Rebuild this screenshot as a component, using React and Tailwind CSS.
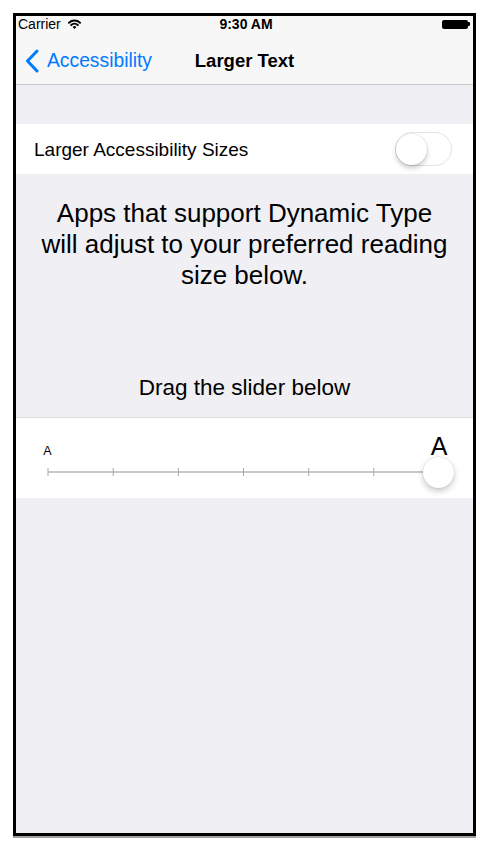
import React from "react";

function Wifi() {
  return (
    <svg width="13" height="10" viewBox="0 0 13 10" className="block">
      <path d="M1 3.8 A8 8 0 0 1 12 3.8" fill="none" stroke="#000" strokeWidth="2" strokeLinecap="round" />
      <path d="M3.2 6.1 A4.8 4.8 0 0 1 9.8 6.1" fill="none" stroke="#000" strokeWidth="2" strokeLinecap="round" />
      <path d="M6.5 9.9 L4.6 7.9 A2.6 2.6 0 0 1 8.4 7.9 Z" fill="#000" />
    </svg>
  );
}

function Chevron() {
  return (
    <svg width="14" height="24" viewBox="0 0 14 24" className="block">
      <polyline points="12,2 2.5,12 12,22" fill="none" stroke="#007aff" strokeWidth="3" strokeLinecap="round" strokeLinejoin="round" />
    </svg>
  );
}

function Track() {
  const ticks = [32, 97.2, 162.3, 227.5, 292.7, 357.8, 423];
  return (
    <svg width="457" height="26" viewBox="0 0 457 26" className="block">
      <line x1="32" y1="13" x2="423" y2="13" stroke="#b6b6b6" strokeWidth="1.5" />
      {ticks.map((x) => (
        <line key={x} x1={x} y1="9" x2={x} y2="17" stroke="#a9a9a9" strokeWidth="1" />
      ))}
    </svg>
  );
}

export default function App() {
  return (
    <div className="w-[492px] h-[854px] bg-white pt-[13px] pl-[13px] font-['Liberation_Sans',Arial,sans-serif] text-black">
      <div className="w-[463px] h-[823px] border-[3px] border-black bg-[#efeff4] shadow-[0_2px_0_#a0a0a0] flex flex-col overflow-hidden">
        {/* Header */}
        <div className="bg-[#f7f7f7] border-b border-[#c8c7cc]">
          <div className="h-[22px] pb-[6px] grid grid-cols-[1fr_auto_1fr] items-center">
            <div className="flex items-center pl-[2px] gap-[7px]">
              <span className="text-[14px] leading-none">Carrier</span>
              <Wifi />
            </div>
            <div className="text-[14px] font-semibold leading-none pl-[3px]">9:30 AM</div>
            <div className="flex justify-end items-center pr-[3px]">
              <div className="w-[26px] h-[9px] rounded-[2px] bg-black" />
              <div className="w-[2px] h-[4px] rounded-r-[1px] bg-black" />
            </div>
          </div>
          <div className="h-[46px] grid grid-cols-[1fr_auto_1fr] items-center">
            <div className="flex items-center pl-[9px] gap-[8px] text-[#007aff]">
              <Chevron />
              <span className="text-[19.3px] leading-none">Accessibility</span>
            </div>
            <div className="text-[18.5px] font-semibold leading-none">Larger Text</div>
            <div />
          </div>
        </div>

        {/* Body */}
        <div className="h-[39px]" />
        <div className="h-[50px] bg-white flex items-center justify-between pl-[18px] pr-[21px]">
          <span className="text-[19px] leading-none">Larger Accessibility Sizes</span>
          <div className="w-[57px] h-[34px] rounded-full border-[1.5px] border-[#e3e3e7] bg-white flex items-center">
            <div className="w-[31px] h-[31px] rounded-full bg-white shadow-[0_3px_5px_rgba(0,0,0,0.22),0_0_0_0.5px_rgba(0,0,0,0.1)]" />
          </div>
        </div>

        <p className="mt-[23.5px] text-center text-[26px] leading-[31px] whitespace-nowrap">
          Apps that support Dynamic Type
          <br />
          will adjust to your preferred reading
          <br />
          size below.
        </p>

        <p className="mt-[83px] text-center text-[22.5px] leading-[27px]">Drag the slider below</p>

        <div className="mt-[16.5px] relative h-[81px] bg-white border-t border-[#d9d9de]">
          <div className="h-[41px] flex items-baseline justify-between pt-[16px] pl-[16.5px] pr-[19px]">
            <span className="w-[30px] text-center text-[12.5px] leading-[25px]">A</span>
            <span className="w-[30px] text-center text-[25px] leading-[25px]">A</span>
          </div>
          <Track />
          <div className="absolute left-[407px] top-[38.5px] w-[31px] h-[31px] rounded-full bg-white shadow-[0_3px_6px_rgba(0,0,0,0.22),0_0_0_0.5px_rgba(0,0,0,0.1)]" />
        </div>
      </div>
    </div>
  );
}
